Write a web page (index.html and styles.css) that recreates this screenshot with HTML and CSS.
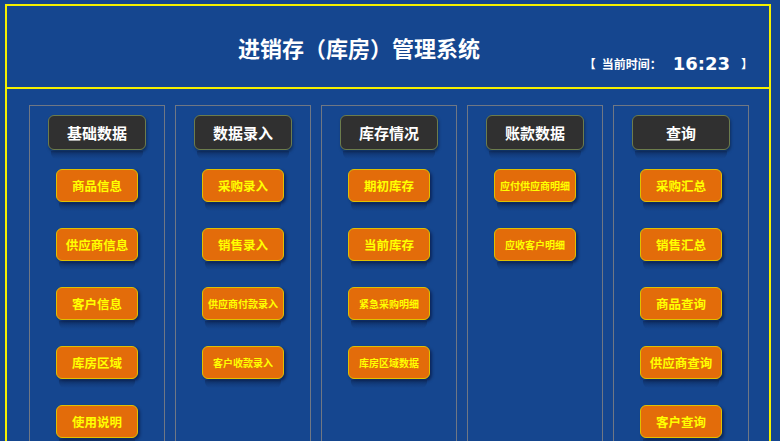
FILE: index.html
```html
<!DOCTYPE html>
<html lang="zh-CN">
<head>
<meta charset="utf-8">
<title>进销存（库房）管理系统</title>
<link rel="stylesheet" href="styles.css">
</head>
<body>
<div class="frame">
  <header class="top">
    <h1 class="title">进销存（库房）管理系统</h1>
    <div class="clock"><span class="br">【</span><span class="lbl">当前时间：</span><span class="time">16:23</span><span class="br br-r">】</span></div>
  </header>
  <main class="board">
    <section class="panel">
      <div class="cap">基础数据</div>
      <div class="btn">商品信息</div>
      <div class="btn">供应商信息</div>
      <div class="btn">客户信息</div>
      <div class="btn">库房区域</div>
      <div class="btn">使用说明</div>
    </section>
    <section class="panel">
      <div class="cap">数据录入</div>
      <div class="btn">采购录入</div>
      <div class="btn">销售录入</div>
      <div class="btn sm">供应商付款录入</div>
      <div class="btn sm">客户收款录入</div>
    </section>
    <section class="panel">
      <div class="cap">库存情况</div>
      <div class="btn">期初库存</div>
      <div class="btn">当前库存</div>
      <div class="btn sm">紧急采购明细</div>
      <div class="btn sm">库房区域数据</div>
    </section>
    <section class="panel">
      <div class="cap">账款数据</div>
      <div class="btn sm">应付供应商明细</div>
      <div class="btn sm">应收客户明细</div>
    </section>
    <section class="panel">
      <div class="cap">查询</div>
      <div class="btn">采购汇总</div>
      <div class="btn">销售汇总</div>
      <div class="btn">商品查询</div>
      <div class="btn">供应商查询</div>
      <div class="btn">客户查询</div>
    </section>
  </main>
</div>
</body>
</html>
```
FILE: styles.css
```css
html, body {
  margin: 0;
  padding: 0;
  height: 100%;
  overflow: hidden;
  background: #15468f;
}
body {
  font-family: "Noto Sans CJK SC", "Noto Sans", sans-serif;
}
.frame {
  margin: 4px 0 0 5px;
  width: 762px;
  height: 480px;
  border: 2px solid #f4f000;
  border-bottom: none;
}
.top {
  display: grid;
  height: 81px;
  border-bottom: 2px solid #f4f000;
}
.title {
  grid-area: 1 / 1;
  justify-self: center;
  align-self: start;
  margin: 28px 58px 0 0;
  font-size: 22px;
  line-height: 26px;
  font-weight: bold;
  color: #ffffff;
  letter-spacing: 0;
}
.clock {
  grid-area: 1 / 1;
  justify-self: end;
  align-self: end;
  margin: 0 16px 12px 0;
  display: flex;
  align-items: center;
  color: #ffffff;
  font-weight: bold;
  height: 24px;
}
.br {
  font-size: 12px;
  width: 12px;
}
.br-r {
  margin-left: 11px;
}
.lbl {
  font-size: 12px;
  margin-left: 6px;
}
.time {
  font-family: "DejaVu Sans", "Noto Sans", sans-serif;
  font-size: 18px;
  font-weight: bold;
  margin-left: 11px;
}
.board {
  display: flex;
  gap: 10px;
  padding: 16px 0 0 22px;
}
.panel {
  width: 134px;
  height: 400px;
  border: 1px solid #6f7784;
  display: flex;
  flex-direction: column;
  align-items: center;
}
.cap {
  position: relative;
  margin-top: 9px;
  width: 96px;
  height: 33px;
  box-sizing: content-box;
  border: 1px solid #6c7c4c;
  border-radius: 6px;
  background: #303030;
  color: #ffffff;
  font-weight: bold;
  font-size: 15px;
  display: flex;
  align-items: center;
  justify-content: center;
  box-shadow: 1px 2px 3px rgba(0, 0, 0, 0.35);
}
.cap::after, .btn::after {
  content: "";
  position: absolute;
  left: 2px;
  right: 2px;
  top: 100%;
  height: 8px;
  margin-top: 2px;
  border-radius: 0 0 6px 6px;
  background: linear-gradient(rgba(10, 30, 70, 0.45), rgba(21, 70, 143, 0));
}
.btn {
  position: relative;
  margin-top: 19px;
  width: 80px;
  height: 31px;
  box-sizing: content-box;
  border: 1px solid #e0c000;
  border-radius: 6px;
  background: #e36c0a;
  color: #ffff00;
  font-weight: bold;
  font-size: 12.5px;
  display: flex;
  align-items: center;
  justify-content: center;
  white-space: nowrap;
  box-shadow: 2px 2px 3px rgba(0, 0, 30, 0.45);
}
.btn + .btn {
  margin-top: 26px;
}
.btn.sm {
  font-size: 10px;
}
```
